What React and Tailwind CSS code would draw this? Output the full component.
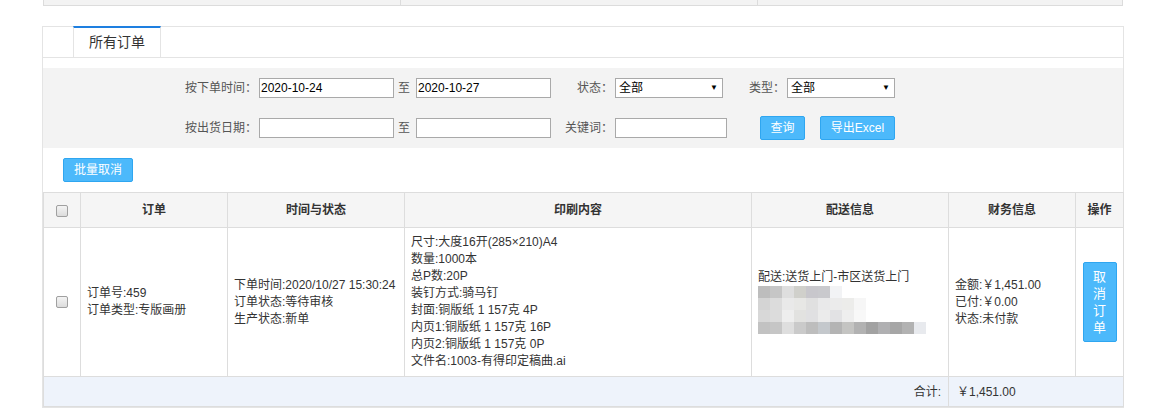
const font = { fontFamily: '"Liberation Sans", Arial, "Noto Sans CJK SC", sans-serif' };

const blurRows = [
    ["#bdbdbd", "#c6c6c6", "#dedede", "#d0d0cb", "#c8c7cc", "#c9c9cd", "#f2f3f5"],
    ["#d4d4d4", "#dcdcdc", "#e9e9e9", "#e7e7e5", "#e0e0e0", "#e9e9ea", "#ebebeb", "#ececea", "#f6f6f6"],
    ["#d8d8d8", "#dcdcdc", "#eeeeee", "#e2e2e0", "#e0e0e2", "#ebebeb", "#e2e2e4", "#eeeeee", "#f8f8f8"],
    ["#c2c2c2", "#c6c6c6", "#dedede", "#cacaca", "#bdbdbd", "#c4c8cc", "#b4b4b4", "#c4c4c2", "#b2b2b2", "#a2a2a2", "#b0b0b2", "#a6a6a6", "#b2b2b2", "#e8eaee"],
];

function Checkbox() {
    return (
        <span className="inline-block w-[12px] h-[12px] rounded-[2px] border border-[#a0a0a0] bg-gradient-to-b from-[#f4f4f4] to-[#dcdcdc] align-middle" />
    );
}

function FakeSelect() {
    return (
        <div className="w-[108px] h-[20px] bg-white border border-[#a9a9a9] flex items-center justify-between pl-[3px] pr-[4px] text-[12px] text-black">
            <span>全部</span>
            <span className="text-[8px]">▼</span>
        </div>
    );
}

function Blurred() {
    return (
        <svg width="170" height="50" className="block mt-[0px]">
            {blurRows.map((row, r) =>
                row.map((c, i) => (
                    <rect key={r + "-" + i} x={i * 12} y={r * 12} width="12" height="12" fill={c} />
                ))
            )}
        </svg>
    );
}

export default function App() {
    const content = [
        "尺寸:大度16开(285×210)A4",
        "数量:1000本",
        "总P数:20P",
        "装钉方式:骑马钉",
        "封面:铜版纸 1 157克 4P",
        "内页1:铜版纸 1 157克 16P",
        "内页2:铜版纸 1 157克 0P",
        "文件名:1003-有得印定稿曲.ai",
    ];

    return (
        <div className="w-[1166px] h-[420px] bg-white overflow-hidden text-[12px] text-[#333]" style={font}>
            {/* cut-off box above */}
            <div className="ml-[43px] w-[1080px] h-[6px] bg-[#f3f3f3] border-x border-b border-[#dcdcdc] flex">
                <div className="w-[357px] border-r border-[#dcdcdc]" />
                <div className="w-[357px] border-r border-[#dcdcdc]" />
            </div>

            <div className="ml-[42px] mt-[20px] w-[1082px] border border-[#e4e4e4]">
                {/* tabs */}
                <div className="h-[31px] border-b border-[#e4e4e4] flex">
                    <div className="ml-[30px] w-[88px] h-[31px] -mt-px border-t-2 border-t-[#1e7fe0] border-x border-[#e4e4e4] bg-white flex items-center justify-center text-[14px] text-[#333]">
                        所有订单
                    </div>
                </div>

                {/* filters */}
                <div className="mt-[10px] bg-[#f3f3f3] h-[80px] pt-[10px] text-[#555]">
                    <div className="flex items-center h-[20px]">
                        <span className="w-[214px] text-right mr-[2px]">按下单时间：</span>
                        <div className="w-[135px] h-[20px] bg-white border border-[#a9a9a9] pl-[1px] flex items-center text-black">2020-10-24</div>
                        <span className="ml-[4px] mr-[6px]">至</span>
                        <div className="w-[135px] h-[20px] bg-white border border-[#a9a9a9] pl-[1px] flex items-center text-black">2020-10-27</div>
                        <span className="w-[62px] text-right mr-[2px]">状态：</span>
                        <FakeSelect />
                        <span className="w-[62px] text-right mr-[2px]">类型：</span>
                        <FakeSelect />
                    </div>
                    <div className="flex items-center h-[24px] mt-[18px]">
                        <span className="w-[214px] text-right mr-[2px]">按出货日期：</span>
                        <div className="w-[135px] h-[20px] bg-white border border-[#a9a9a9]" />
                        <span className="ml-[4px] mr-[6px]">至</span>
                        <div className="w-[135px] h-[20px] bg-white border border-[#a9a9a9]" />
                        <span className="w-[62px] text-right mr-[2px]">关键词：</span>
                        <div className="w-[112px] h-[20px] bg-white border border-[#a9a9a9]" />
                        <button className="ml-[33px] w-[45px] h-[24px] rounded-[2px] bg-[#4cb9fb] border border-[#2fa6f0] text-white text-[12px]">查询</button>
                        <button className="ml-[15px] w-[75px] h-[24px] rounded-[2px] bg-[#4cb9fb] border border-[#2fa6f0] text-white text-[12px]">导出Excel</button>
                    </div>
                </div>

                <div className="pt-[10px] pb-[10px] pl-[20px]">
                    <button className="w-[70px] h-[24px] rounded-[2px] bg-[#4cb9fb] border border-[#2fa6f0] text-white text-[12px]">批量取消</button>
                </div>

                {/* table */}
                <table className="w-[1080px] table-fixed border-collapse">
                    <colgroup>
                        <col className="w-[37px]" />
                        <col className="w-[147px]" />
                        <col className="w-[177px]" />
                        <col className="w-[347px]" />
                        <col className="w-[197px]" />
                        <col className="w-[127px]" />
                        <col className="w-[48px]" />
                    </colgroup>
                    <thead>
                        <tr className="h-[35px] bg-[#f5f5f5]">
                            <th className="border border-[#dddddd] text-center"><Checkbox /></th>
                            <th className="border border-[#dddddd] font-bold">订单</th>
                            <th className="border border-[#dddddd] font-bold">时间与状态</th>
                            <th className="border border-[#dddddd] font-bold">印刷内容</th>
                            <th className="border border-[#dddddd] font-bold">配送信息</th>
                            <th className="border border-[#dddddd] font-bold">财务信息</th>
                            <th className="border border-[#dddddd] font-bold">操作</th>
                        </tr>
                    </thead>
                    <tbody>
                        <tr className="h-[149px] leading-[17px]">
                            <td className="border border-[#dddddd] text-center align-middle"><Checkbox /></td>
                            <td className="border border-[#dddddd] px-[6px] align-middle">
                                <div>订单号:459</div>
                                <div>订单类型:专版画册</div>
                            </td>
                            <td className="border border-[#dddddd] px-[6px] align-middle">
                                <div>下单时间:2020/10/27 15:30:24</div>
                                <div>订单状态:等待审核</div>
                                <div>生产状态:新单</div>
                            </td>
                            <td className="border border-[#dddddd] px-[6px] align-middle">
                                {content.map((line) => (
                                    <div key={line}>{line}</div>
                                ))}
                            </td>
                            <td className="border border-[#dddddd] px-[6px] align-middle">
                                <div>配送:送货上门-市区送货上门</div>
                                <Blurred />
                            </td>
                            <td className="border border-[#dddddd] px-[6px] align-middle">
                                <div>金额:￥1,451.00</div>
                                <div>已付:￥0.00</div>
                                <div>状态:未付款</div>
                            </td>
                            <td className="border border-[#dddddd] align-middle text-center">
                                <button className="w-[34px] h-[80px] rounded-[2px] bg-[#4cb9fb] border border-[#2fa6f0] text-white text-[13px] leading-[17px] inline-flex flex-col items-center justify-center">
                                    <span>取</span>
                                    <span>消</span>
                                    <span>订</span>
                                    <span>单</span>
                                </button>
                            </td>
                        </tr>
                        <tr className="h-[30px] bg-[#eef3fb]">
                            <td colSpan={5} className="border border-[#dddddd] text-right pr-[7px]">合计:</td>
                            <td colSpan={2} className="border border-[#dddddd] pl-[8px]">￥1,451.00</td>
                        </tr>
                    </tbody>
                </table>
            </div>
        </div>
    );
}
